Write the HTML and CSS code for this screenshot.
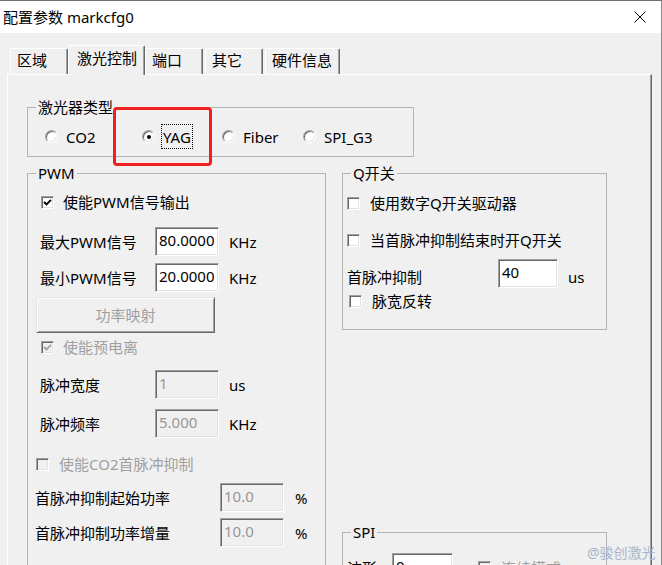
FILE: index.html
```html
<!DOCTYPE html>
<html lang="zh-CN">
<head>
    <meta charset="UTF-8">
    <title>配置参数 markcfg0</title>
    <link rel="stylesheet" href="styles.css">
</head>
<body>

<div class="window">
    <div class="titlebar">
        <span class="title">配置参数 markcfg0</span>
        <svg class="close" width="12" height="12" viewBox="0 0 12 12">
            <path d="M0.5 0.5 L11.5 11.5 M11.5 0.5 L0.5 11.5" stroke="#000" stroke-width="1" fill="none"/>
        </svg>
    </div>

    <div class="client">
        <div class="tabs">
            <div class="tab">区域</div>
            <div class="tab active">激光控制</div>
            <div class="tab">端口</div>
            <div class="tab">其它</div>
            <div class="tab">硬件信息</div>
        </div>

        <div class="panel">
            <fieldset class="group laser">
                <legend>激光器类型</legend>
                <div class="radios">
                    <div class="radio"><span class="dot"></span><span class="rlabel">CO2</span></div>
                    <div class="radio"><span class="dot on"></span><span class="rlabel focus">YAG</span></div>
                    <div class="radio"><span class="dot"></span><span class="rlabel">Fiber</span></div>
                    <div class="radio"><span class="dot"></span><span class="rlabel">SPI_G3</span></div>
                </div>
            </fieldset>

            <div class="columns">
                <fieldset class="group pwm">
                    <legend>PWM</legend>
                    <div class="row chk-row ml13">
                        <span class="box"><svg width="9" height="9" viewBox="0 0 9 9"><polyline points="1,4 3.5,6.5 8,1.8" fill="none" stroke="#000" stroke-width="1.9"/></svg></span>
                        <span>使能PWM信号输出</span>
                    </div>
                    <div class="row field-row ml12 mt15">
                        <span class="flabel w115">最大PWM信号</span>
                        <span class="edit">80.0000</span>
                        <span class="unit">KHz</span>
                    </div>
                    <div class="row field-row ml12 mt7">
                        <span class="flabel w115">最小PWM信号</span>
                        <span class="edit">20.0000</span>
                        <span class="unit">KHz</span>
                    </div>
                    <div class="btn mt5">功率映射</div>
                    <div class="row chk-row ml13 mt4 disabled">
                        <span class="box off"><svg width="9" height="9" viewBox="0 0 9 9"><polyline points="1,4 3.5,6.5 8,1.8" fill="none" stroke="#a0a0a0" stroke-width="1.9"/></svg></span>
                        <span>使能预电离</span>
                    </div>
                    <div class="row field-row ml12 mt13">
                        <span class="flabel w115">脉冲宽度</span>
                        <span class="edit off">1</span>
                        <span class="unit">us</span>
                    </div>
                    <div class="row field-row ml12 mt10">
                        <span class="flabel w115">脉冲频率</span>
                        <span class="edit off">5.000</span>
                        <span class="unit">KHz</span>
                    </div>
                    <div class="row chk-row ml8 mt16 disabled">
                        <span class="box off wide-gap"></span>
                        <span>使能CO2首脉冲抑制</span>
                    </div>
                    <div class="row field-row ml7 mt9">
                        <span class="flabel w185">首脉冲抑制起始功率</span>
                        <span class="edit off">10.0</span>
                        <span class="unit u11">%</span>
                    </div>
                    <div class="row field-row ml7 mt6">
                        <span class="flabel w185">首脉冲抑制功率增量</span>
                        <span class="edit off">10.0</span>
                        <span class="unit u11">%</span>
                    </div>
                </fieldset>

                <div class="side">
                    <fieldset class="group qsw">
                        <legend>Q开关</legend>
                        <div class="row chk-row ml4">
                            <span class="box wide-gap"></span>
                            <span>使用数字Q开关驱动器</span>
                        </div>
                        <div class="row chk-row ml4 mt17">
                            <span class="box wide-gap"></span>
                            <span>当首脉冲抑制结束时开Q开关</span>
                        </div>
                        <div class="row field-row ml4 mt9">
                            <span class="flabel w151 low">首脉冲抑制</span>
                            <span class="edit short">40</span>
                            <span class="unit low">us</span>
                        </div>
                        <div class="row chk-row ml6 mt3">
                            <span class="box wide-gap"></span>
                            <span>脉宽反转</span>
                        </div>
                    </fieldset>

                    <fieldset class="group spi">
                        <legend>SPI</legend>
                        <div class="row field-row ml4">
                            <span class="flabel w45">波形</span>
                            <span class="edit short61">0</span>
                            <span class="box off wide-gap spi-chk"></span>
                            <span class="disabled-text">连续模式</span>
                        </div>
                    </fieldset>
                </div>
            </div>
        </div>
    </div>

    <div class="mark"></div>
    <div class="watermark">@骏创激光</div>
</div>

</body>
</html>
```

FILE: styles.css
```css
* {
    box-sizing: border-box;
}

body {
    margin: 0;
    width: 662px;
    height: 565px;
    overflow: hidden;
    background-color: #f0f0f0;
    font-family: "Noto Sans", "Noto Sans CJK SC", sans-serif;
    font-size: 15px;
    line-height: 18px;
    color: #000;
}

.window {
    position: relative;
    height: 565px;
    border-top: 1px solid #6f6f6f;
    border-right: 1px solid #8a8a8a;
}

/* title bar */
.titlebar {
    height: 32px;
    background-color: #fff;
    display: flex;
    align-items: center;
    justify-content: space-between;
    padding-left: 3px;
    padding-right: 15px;
}

.close {
    display: block;
}

/* tabs */
.client {
    padding: 12px 9px 0 7px;
}

.tabs {
    display: flex;
    align-items: flex-end;
    height: 29px;
    padding-left: 3px;
}

.tab {
    height: 26px;
    min-width: 58px;
    padding: 2px 7px 0 6px;
    margin-right: 2px;
    border: 1px solid;
    border-color: #fff #696969 transparent #fff;
    border-bottom: 0;
    border-radius: 2px 2px 0 0;
    box-shadow: inset -1px 0 0 #a0a0a0;
    white-space: nowrap;
}

.tab.active {
    height: 30px;
    margin-left: -2px;
    margin-right: 0;
    margin-bottom: -1px;
    padding: 3px 7px 0 8px;
    position: relative;
    z-index: 1;
    background-color: #f0f0f0;
}

.panel {
    height: 600px;
    border-top: 1px solid #fff;
    border-left: 1px solid #fff;
    border-right: 1px solid #696969;
    box-shadow: inset -1px 0 0 #a0a0a0;
    padding: 23px 0 0 19px;
}

/* group boxes */
.group {
    margin: 0;
    padding: 0;
    min-width: 0;
    border: 1px solid #b4b4b4;
}

.group legend {
    margin-left: 8px;
    padding: 0 2px;
    line-height: 18px;
}

.laser {
    width: 387px;
    padding: 8px 0 7px;
}

.radios {
    display: grid;
    grid-template-columns: 97px 80px 81px auto;
    padding-left: 17px;
}

.radio {
    display: flex;
    align-items: center;
}

.dot {
    width: 13px;
    height: 13px;
    margin-right: 6px;
    border-radius: 50%;
    background-color: #fff;
    border: 1px solid;
    border-color: #a0a0a0 #fff #fff #a0a0a0;
    box-shadow: inset 1px 1px 0 #696969, inset -1px -1px 0 #e3e3e3;
    display: flex;
    align-items: center;
    justify-content: center;
    flex: none;
}

.dot.on::after {
    content: "";
    width: 4px;
    height: 4px;
    border-radius: 50%;
    background-color: #000;
}

.rlabel {
    padding: 3px 1px 2px;
    border: 1px dotted transparent;
    line-height: 18px;
}

.rlabel.focus {
    border-color: #000;
}

.columns {
    display: flex;
    gap: 16px;
    margin-top: 7px;
}

.pwm {
    width: 299px;
    padding: 10px 0 40px;
}

.side {
    width: 265px;
}

.qsw {
    padding: 11px 0 18px;
}

.spi {
    margin-top: 193px;
    padding: 12px 0 40px;
}

/* rows */
.row {
    display: flex;
    align-items: center;
}

.chk-row {
    height: 20px;
}

.field-row {
    height: 29px;
}

.box {
    width: 13px;
    height: 13px;
    margin-right: 9px;
    background-color: #fff;
    border: 1px solid;
    border-color: #a0a0a0 #fff #fff #a0a0a0;
    box-shadow: inset 1px 1px 0 #696969, inset -1px -1px 0 #e3e3e3;
    display: flex;
    align-items: center;
    justify-content: center;
    flex: none;
}

.box svg {
    display: block;
}

.box.off {
    background-color: #f0f0f0;
}

.box.wide-gap {
    margin-right: 10px;
}

.spi-chk {
    margin-left: 25px;
}

.disabled,
.disabled-text {
    color: #a0a0a0;
}

.flabel {
    flex: none;
    white-space: nowrap;
}

.w115 { width: 115px; }
.w185 { width: 185px; }
.w151 { width: 151px; }
.w45  { width: 45px; }

.low {
    margin-top: 6px;
}

.edit {
    width: 64px;
    height: 29px;
    flex: none;
    background-color: #fff;
    border: 1px solid;
    border-color: #a0a0a0 #fff #fff #a0a0a0;
    box-shadow: inset 1px 1px 0 #696969, inset -1px -1px 0 #e3e3e3;
    padding: 0 3px;
    line-height: 25px;
}

.edit.off {
    background-color: #f0f0f0;
    color: #979797;
}

.edit.short {
    width: 60px;
}

.edit.short61 {
    width: 61px;
}

.unit {
    margin-left: 10px;
}

.unit.u11 {
    margin-left: 11px;
}

.btn {
    width: 179px;
    height: 36px;
    margin-left: 8px;
    border: 1px solid;
    border-color: #e3e3e3 #696969 #696969 #e3e3e3;
    box-shadow: inset 1px 1px 0 #fff, inset -1px -1px 0 #a0a0a0;
    color: #a0a0a0;
    display: flex;
    align-items: center;
    justify-content: center;
}

/* spacing helpers */
.ml4  { margin-left: 4px; }
.ml6  { margin-left: 6px; }
.ml7  { margin-left: 7px; }
.ml8  { margin-left: 8px; }
.ml12 { margin-left: 12px; }
.ml13 { margin-left: 13px; }

.mt3  { margin-top: 3px; }
.mt4  { margin-top: 4px; }
.mt5  { margin-top: 5px; }
.mt6  { margin-top: 6px; }
.mt7  { margin-top: 7px; }
.mt9  { margin-top: 9px; }
.mt10 { margin-top: 10px; }
.mt13 { margin-top: 13px; }
.mt15 { margin-top: 15px; }
.mt16 { margin-top: 16px; }
.mt17 { margin-top: 17px; }

/* overlays */
.mark {
    position: absolute;
    left: 113px;
    top: 106px;
    width: 99px;
    height: 59px;
    border: 3px solid #ee2020;
    border-radius: 4px;
}

.watermark {
    position: absolute;
    left: 587px;
    top: 543px;
    font-size: 14px;
    color: #a9b5cb;
    white-space: nowrap;
}
```
